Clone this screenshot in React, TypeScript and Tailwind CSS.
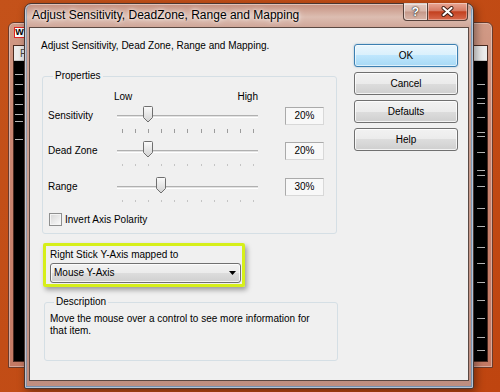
import React from 'react';

const leftTicks = [74, 84, 94, 104, 114, 121, 139];
const rightTicks = [84, 98, 103, 117, 132, 136, 152, 170, 175, 186, 208, 226, 247, 263, 282, 300, 318, 337, 350];

const sliders = [
  { label: 'Sensitivity', pct: 0.2, value: '20%', dark: true, gap: 'mt-[4px]' },
  { label: 'Dead Zone', pct: 0.2, value: '20%', dark: false, gap: 'mt-[9px]' },
  { label: 'Range', pct: 0.3, value: '30%', dark: false, gap: 'mt-[12px]' },
];

const btn =
  'h-[23px] w-full rounded-[3px] border border-[#707070] bg-[linear-gradient(to_bottom,#f2f2f2_0%,#ebebeb_50%,#dddddd_50%,#cfcfcf_100%)] shadow-[inset_0_0_0_1px_rgba(255,255,255,0.75)] flex items-center justify-center';

function TickColumn({ ys, top }: { ys: number[]; top: number }) {
  let prev = top;
  return (
    <div className="flex w-[8px] flex-col">
      {ys.map((y, i) => {
        const m = y - prev;
        prev = y + 1;
        return <div key={i} className="h-px w-full bg-[#b9b9b9]" style={{ marginTop: m }} />;
      })}
    </div>
  );
}

function BackWindow() {
  return (
    <div className="absolute left-[8px] top-[22px] flex h-[346px] w-[485px] flex-col rounded-t-[6px] border border-[#6b3b2b] bg-[linear-gradient(to_bottom,#d19a86,#c98672_30%,#c47a64)] px-[4px] pb-[5px] shadow-[inset_0_0_0_1px_rgba(255,255,255,0.35)]">
      <div className="flex h-[22px] items-start">
        <div className="ml-[1px] mt-[4px] flex h-[11px] w-[11px] items-center justify-center border border-[#e02424] bg-white text-[9px] font-bold leading-none">
          W
        </div>
      </div>
      <div className="flex flex-1 flex-col border border-[#4a2a20] bg-black">
        <div className="h-[15px] border-b border-[#c8c8c8] bg-[#ececec] pl-[6px] text-[10px] leading-[15px] text-[#444]">File</div>
        <div className="flex flex-1 justify-between">
          <div className="ml-[1px]">
            <TickColumn ys={leftTicks} top={61} />
          </div>
          <div className="mr-[2px]">
            <TickColumn ys={rightTicks} top={61} />
          </div>
        </div>
      </div>
    </div>
  );
}

function Thumb() {
  return (
    <svg width="10" height="17" viewBox="0 0 10 17">
      <defs>
        <linearGradient id="thumbFill" x1="0" y1="0" x2="0" y2="1">
          <stop offset="0" stopColor="#fbfbfb" />
          <stop offset="1" stopColor="#d2d2d2" />
        </linearGradient>
      </defs>
      <path
        d="M0.5 1.5 Q0.5 0.5 1.5 0.5 H8.5 Q9.5 0.5 9.5 1.5 V11.5 L5 16 L0.5 11.5 Z"
        fill="url(#thumbFill)"
        stroke="#6f6f6f"
      />
    </svg>
  );
}

function Slider({ pct }: { pct: number }) {
  const left = 4.5 + pct * 132 - 5;
  return (
    <div className="relative flex h-[18px] w-[141px] items-center">
      <div className="h-[3px] w-full border-b border-t border-b-white border-t-[#b0b0b0] bg-[#e2e2e2]" />
      <div className="absolute -top-[1px]" style={{ left }}>
        <Thumb />
      </div>
    </div>
  );
}

function Ticks({ dark }: { dark: boolean }) {
  return (
    <div className="ml-[74px] flex w-[132px] justify-between">
      {Array.from({ length: 11 }).map((_, i) =>
        dark ? (
          <div key={i} className="h-[4px] w-px bg-[#9c9c9c]" />
        ) : (
          <div key={i} className="h-[2px] w-px bg-[#c4c4c4]" />
        )
      )}
    </div>
  );
}

function Dialog() {
  return (
    <div className="absolute left-[24px] top-[3px] flex h-[386px] w-[450px] flex-col rounded-b-[2px] rounded-t-[7px] border border-[#4a3631] bg-[linear-gradient(to_bottom,#c58f7e_0px,#dcbdb1_13px,#cfa597_24px,#c89b8c_50%,#bf8e80_100%)] px-[4px] pb-[7px] shadow-[inset_0_0_0_1px_rgba(255,255,255,0.45),inset_-2px_-2px_0_rgba(60,150,215,0.55),inset_2px_0_0_rgba(60,150,215,0.4),2px_3px_8px_rgba(0,0,0,0.4)]">
      <div className="flex h-[23px] items-start">
        <span className="mt-[4px] pl-[3px] text-[12px] leading-[14px] text-black [text-shadow:0_0_6px_rgba(255,255,255,0.95),0_0_3px_rgba(255,255,255,0.9)]">
          Adjust Sensitivity, DeadZone, Range and Mapping
        </span>
        <div className="-mt-px ml-auto mr-[1px] flex h-[18px]">
          <div className="flex h-full w-[25px] items-center justify-center rounded-bl-[4px] border border-t-0 border-[#54403a] bg-[linear-gradient(to_bottom,rgba(255,255,255,0.55),rgba(225,200,190,0.45)_48%,rgba(185,135,120,0.55)_52%,rgba(215,175,160,0.65))] shadow-[inset_0_0_0_1px_rgba(255,255,255,0.5)]">
            <span className="text-[12px] font-bold leading-none text-white [text-shadow:0_0_2px_#222,0_0_1px_#000]">?</span>
          </div>
          <div className="flex h-full w-[40px] items-center justify-center rounded-br-[4px] border border-l-0 border-t-0 border-[#54403a] bg-[linear-gradient(to_bottom,#eaa896,#d67a63_45%,#c3401f_52%,#d86a4d)] shadow-[inset_0_0_0_1px_rgba(255,255,255,0.35)]">
            <svg width="13" height="11" viewBox="0 0 13 11">
              <path d="M2.5 2 L10.5 9 M10.5 2 L2.5 9" stroke="#3a1a12" strokeWidth="4" strokeLinecap="round" />
              <path d="M2.5 2 L10.5 9 M10.5 2 L2.5 9" stroke="#ffffff" strokeWidth="2.2" strokeLinecap="round" />
            </svg>
          </div>
        </div>
      </div>

      <div className="flex flex-1 border border-[#5a4842] bg-[#f0f0f0] text-[10px] leading-[12px]">
        <div className="flex w-[323px] flex-col">
          <div className="ml-[11px] mt-[12px]">Adjust Sensitivity, Dead Zone, Range and Mapping.</div>

          <fieldset className="ml-[12px] mt-[18px] w-[295px] rounded-[3px] border border-[#d5dfe5] pb-[7px] pl-[5px]">
            <legend className="ml-[5px] px-[2px] leading-[12px]">Properties</legend>
            <div className="ml-[66px] mt-[9px] flex w-[144px] justify-between">
              <span>Low</span>
              <span>High</span>
            </div>
            {sliders.map((s) => (
              <React.Fragment key={s.label}>
                <div className={`${s.gap} flex h-[18px] items-center`}>
                  <span className="w-[69px]">{s.label}</span>
                  <Slider pct={s.pct} />
                  <div className="ml-[27px] flex h-[18px] w-[39px] items-center justify-center border border-[#aaaaaa] border-b-[#d8d8d8] border-r-[#d8d8d8] bg-[#f8f8f8]">
                    {s.value}
                  </div>
                </div>
                <div className="mt-[4px]">
                  <Ticks dark={s.dark} />
                </div>
              </React.Fragment>
            ))}
            <div className="mt-[11px] flex h-[13px] items-center">
              <div className="ml-[1px] h-[13px] w-[13px] border border-[#8e8f8f] bg-[linear-gradient(135deg,#d6d6d6,#fbfbfb)] shadow-[inset_0_0_0_1px_#f4f4f4]" />
              <span className="ml-[3px]">Invert Axis Polarity</span>
            </div>
          </fieldset>

          <div className="ml-[13px] mt-[9px] h-[44px] w-[202px] rounded-[2px] border-[3px] border-[#d6ef1a] pl-[4px] pt-[3px] shadow-[2px_3px_5px_rgba(0,0,0,0.35)]">
            <div>Right Stick Y-Axis mapped to</div>
            <div className="mt-[2px] flex h-[20px] w-[191px] items-center justify-between rounded-[3px] border border-[#707070] bg-[linear-gradient(to_bottom,#f2f2f2_0%,#ebebeb_50%,#dddddd_50%,#cfcfcf_100%)] pl-[3px] pr-[4px] shadow-[inset_0_0_0_1px_rgba(255,255,255,0.75)]">
              <span>Mouse Y-Axis</span>
              <svg width="7" height="4" viewBox="0 0 7 4">
                <path d="M0 0 H7 L3.5 4 Z" fill="#000" />
              </svg>
            </div>
          </div>

          <fieldset className="ml-[14px] mt-[9px] h-[65px] w-[294px] rounded-[3px] border border-[#d5dfe5] pl-[5px]">
            <legend className="ml-[4px] px-[2px] leading-[12px]">Description</legend>
            <div className="mt-[5px]">
              Move the mouse over a control to see more information for
              <br />
              that item.
            </div>
          </fieldset>
        </div>

        <div className="ml-auto mr-[10px] flex w-[104px] flex-col gap-[5px] pt-[16px]">
          <div className="flex h-[23px] w-full items-center justify-center rounded-[3px] border border-[#3c7fb1] bg-[linear-gradient(to_bottom,#eaf6fd_0%,#d9f0fc_50%,#bee6fd_50%,#a7d9f5_100%)] shadow-[inset_0_0_0_1px_rgba(255,255,255,0.6),0_0_2px_rgba(60,127,177,0.5)]">
            OK
          </div>
          <div className={btn}>Cancel</div>
          <div className={btn}>Defaults</div>
          <div className={btn}>Help</div>
        </div>
      </div>
    </div>
  );
}

export default function App() {
  return (
    <div className="relative h-[392px] w-[500px] overflow-hidden bg-[linear-gradient(135deg,#c4521a,#bf4510)] font-['Liberation_Sans',Arial,sans-serif] text-black">
      <BackWindow />
      <Dialog />
    </div>
  );
}
